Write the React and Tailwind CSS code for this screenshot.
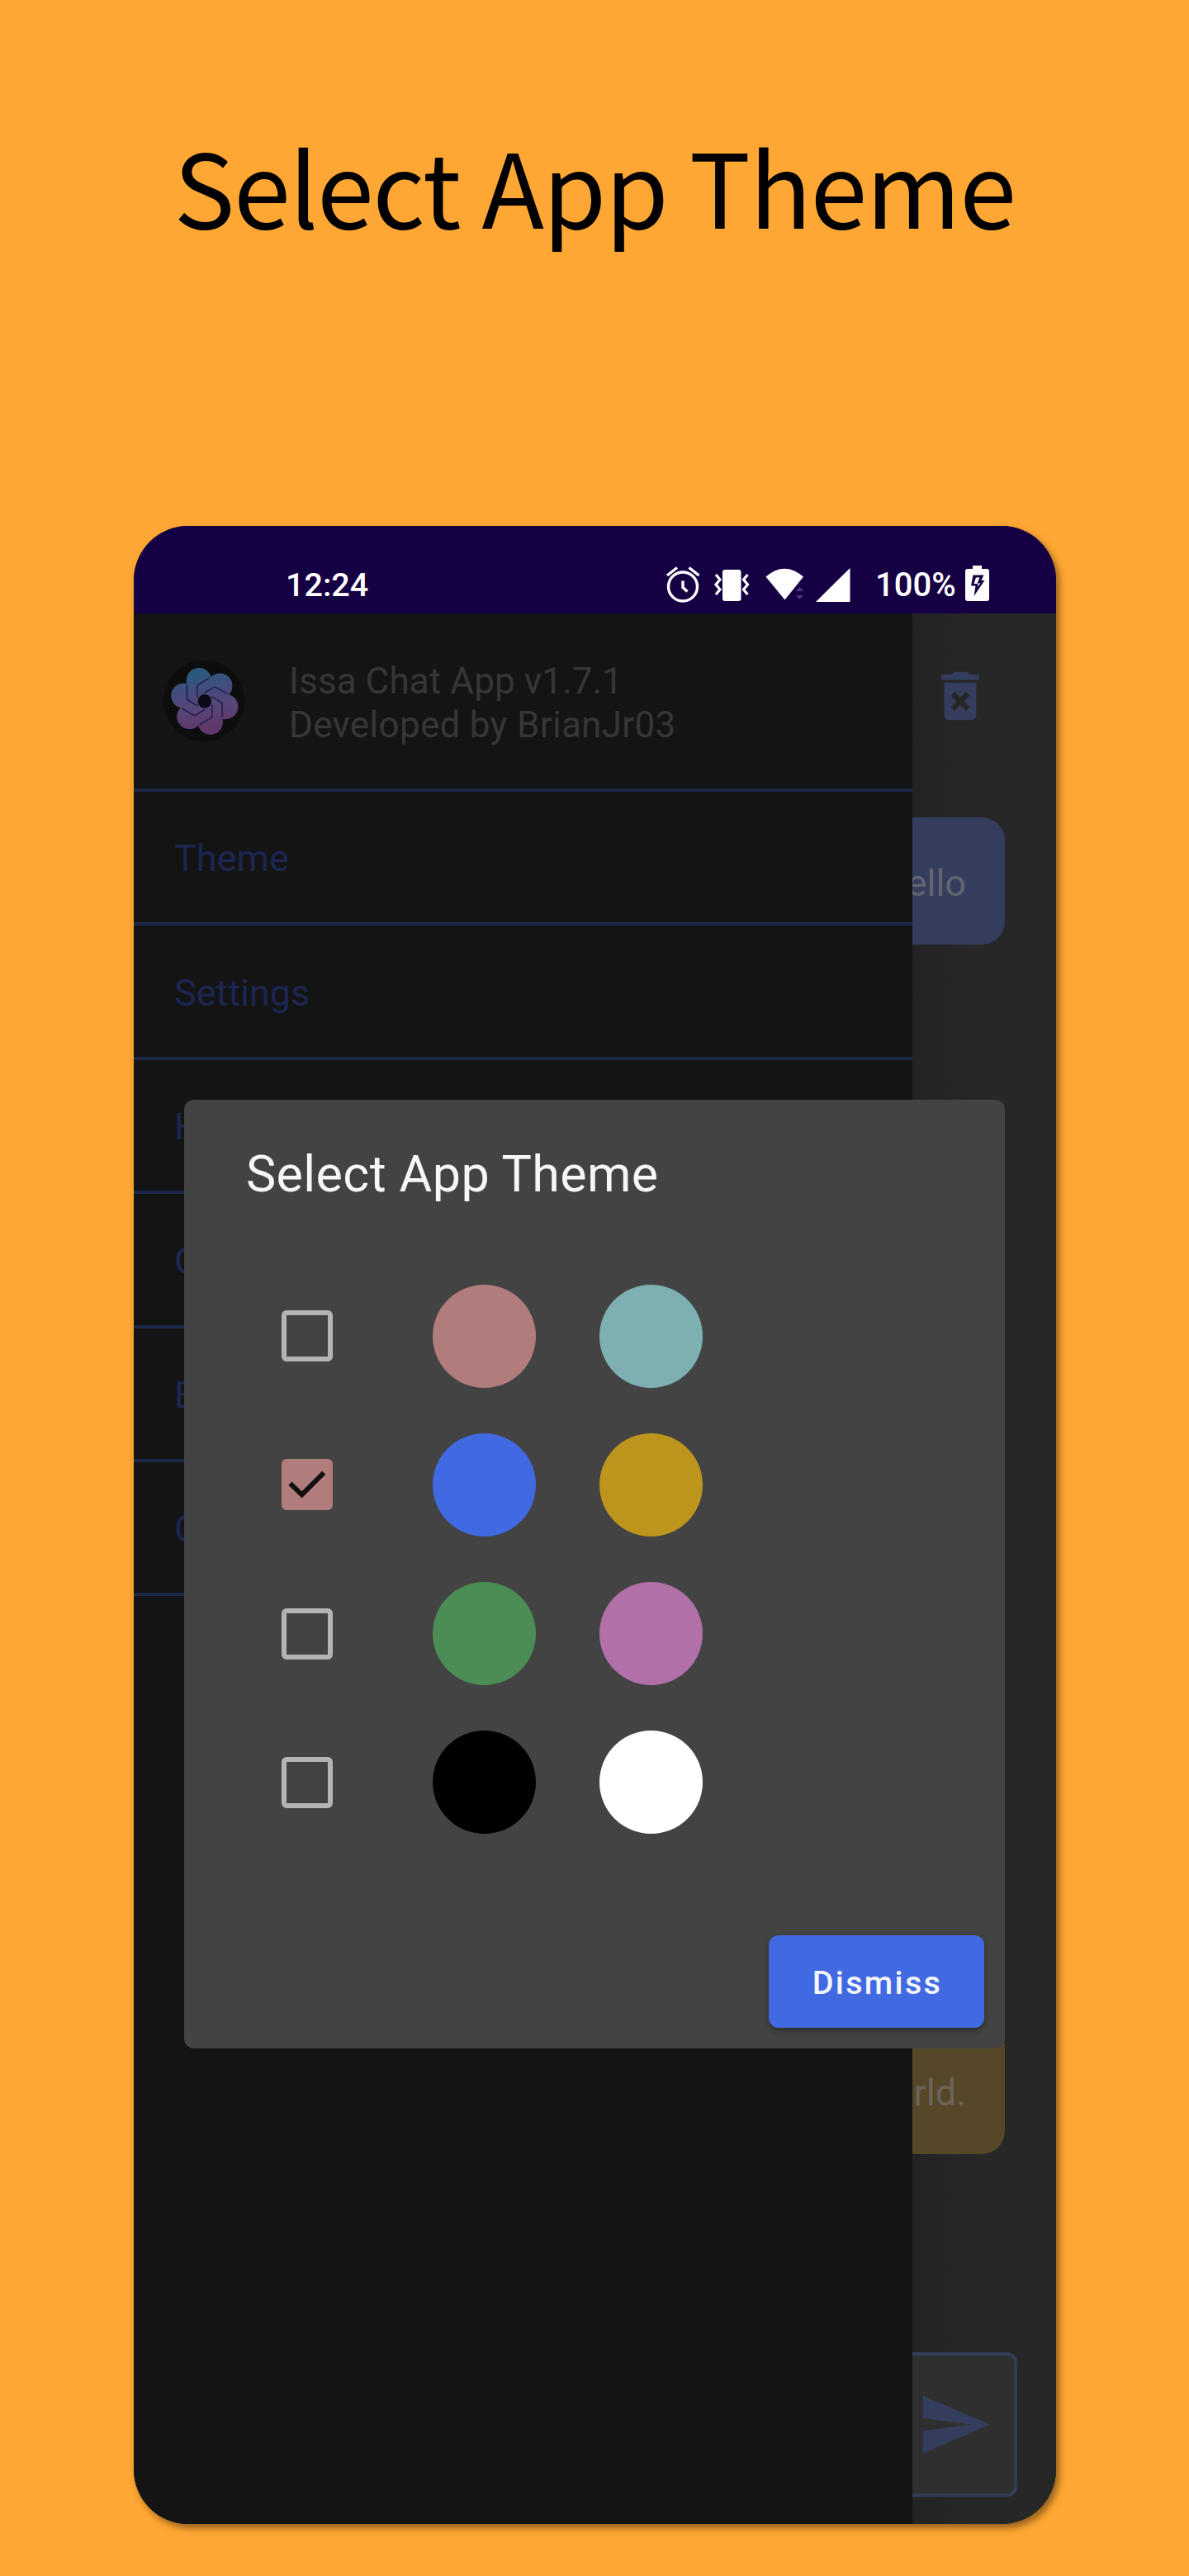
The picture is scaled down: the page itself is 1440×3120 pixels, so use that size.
const roboto = "font-['Roboto',sans-serif]";

const menuItems = ["Theme", "Settings", "Help", "Get API Key", "Edit Key", "Credits"];

const themes = [
  { checked: false, a: "bg-[#b07c7c]", b: "bg-[#7eafb1]" },
  { checked: true, a: "bg-[#4169e1]", b: "bg-[#bd951d]" },
  { checked: false, a: "bg-[#4c8d55]", b: "bg-[#b270a9]" },
  { checked: false, a: "bg-black", b: "bg-white" },
];

const petalAngles = [0, 60, 120, 180, 240, 300];

function StatusIcons() {
  return (
    <svg className="h-[64px] w-[250px] shrink-0" viewBox="0 0 250 64" fill="none">
      <g stroke="#fff" strokeWidth="3.4">
        <circle cx="31" cy="34.5" r="17.5" />
        <path d="M31 27.500V35.500l5.500 5" />
        <path d="M12 21l12-9.500M50.500 21l-12-9.500" />
      </g>
      <rect x="79" y="14" width="22.500" height="38" rx="3" fill="#fff" />
      <g stroke="#fff" strokeWidth="3.2">
        <path d="M71 20l5 6-5 6 5 6-5 6" />
        <path d="M109.500 20l-5 6 5 6-5 6 5 6" />
      </g>
      <path d="M131.500 22.500Q154 3 177 22.500L154.500 50.500Z" fill="#fff" />
      <path d="M168 40l4.500-5 4.500 5zM168 45l4.500 5 4.500-5z" fill="#4b3a86" />
      <path d="M233.500 12V53H192Z" fill="#fff" />
    </svg>
  );
}

function BatteryIcon() {
  return (
    <svg className="h-[43px] w-[29px] shrink-0" viewBox="0 0 29 43">
      <path
        d="M9 0h11v4h6q3 0 3 3v33q0 3-3 3H3q-3 0-3-3V7q0-3 3-3h6z"
        fill="#fff"
      />
      <path d="M9.500 11.500h13l-3 6.500h4L10.500 37l2-12.500H7z" fill="#160044" />
      <path d="M13 14.500h4.500l-3 7h4l-3.500 4 .500-3.500h-5z" fill="#fff" />
    </svg>
  );
}

function AppLogo() {
  return (
    <svg className="size-[98px] shrink-0" viewBox="0 0 294 294" fill="none">
      <defs>
        <linearGradient id="logo" x1="-20" y1="-100" x2="15" y2="100" gradientUnits="userSpaceOnUse">
          <stop offset="0" stopColor="#2c587d" />
          <stop offset="0.35" stopColor="#484b7c" />
          <stop offset="0.65" stopColor="#584576" />
          <stop offset="1" stopColor="#60366b" />
        </linearGradient>
      </defs>
      <circle cx="147" cy="147" r="147" fill="#0d0d0e" />
      <g transform="translate(149.500 148)">
        <path
          fill="url(#logo)"
          d="M-64.700 -63.900A42.500 42.500 0 0 1 23 -88A42.500 42.500 0 0 1 87.700 -24.100A42.500 42.500 0 0 1 64.700 63.900A42.500 42.500 0 0 1 -23 88A42.500 42.500 0 0 1 -87.700 24.100A42.500 42.500 0 0 1 -64.700 -63.900Z"
        />
        <g stroke="#272050" strokeWidth="5" strokeLinejoin="round">
          {petalAngles.map((angle) => (
            <path key={angle} d="M-27 -13V-58L18 -85" transform={`rotate(${angle})`} />
          ))}
        </g>
        <circle r="25" fill="#0b0a16" />
      </g>
    </svg>
  );
}

function Checkbox({ checked }) {
  if (!checked) {
    return <span className="size-[62px] rounded-[6px] border-[6px] border-[#b4b4b4]" />;
  }
  return (
    <span className="size-[62px] rounded-[6px] bg-[#b07c7c]">
      <svg viewBox="0 0 63 63" fill="none" className="size-full">
        <path d="M10.500 30L25 44 52 17" stroke="#141010" strokeWidth="6" />
      </svg>
    </span>
  );
}

export default function App() {
  return (
    <div className="flex h-[3120px] w-[1440px] flex-col overflow-hidden bg-[#ffa734]">
      <h1 className="h-[637px] pt-[133px] text-center font-['Noto_Sans_CJK_SC',sans-serif] text-[124px] leading-[180px] tracking-[-1.4px] whitespace-nowrap text-black">
        Select App Theme
      </h1>
      <div
        className={`relative ml-[162px] flex h-[2420px] w-[1117px] flex-col overflow-hidden rounded-[66px] bg-[#262626] shadow-[4px_5px_8px_rgba(60,40,10,0.55)] ${roboto}`}
      >
        <header className="flex h-[106px] shrink-0 items-start bg-[#160044] pt-[39px] text-[40px] leading-[66px] font-medium text-white">
          <span className="w-[450px] pl-[184px] text-[39.500px]">12:24</span>
          <span className="ml-[184px]">
            <StatusIcons />
          </span>
          <span className="ml-[14px] w-[96px] whitespace-nowrap">100%</span>
          <span className="ml-[13px] pt-[9px]">
            <BatteryIcon />
          </span>
        </header>

        <div className="flex min-h-0 flex-1">
          <aside className="w-[943px] shrink-0 bg-[#141414]">
            <div className="flex h-[216px] items-center gap-[54px] border-b-4 border-[#1d2747] pl-[36px]">
              <AppLogo />
              <p className="pt-[6px] text-[44px] leading-[53px] tracking-[0.3px] text-[#363636]">
                <span className="tracking-[0.1px]">Issa Chat App v1.7.1</span>
                <br />
                Developed by BrianJr03
              </p>
            </div>
            <nav>
              {menuItems.map((item) => (
                <div
                  key={item}
                  className="flex h-[162.400px] items-center border-b-4 border-[#1d2747] pt-[4px] pl-[49px] text-[45px] text-[#1c2653]"
                >
                  {item}
                </div>
              ))}
            </nav>
          </aside>

          <main className="flex flex-1 flex-col overflow-hidden bg-linear-to-r from-[#232323] to-[#272727] to-40%">
            <svg className="mt-[61px] ml-[19px] size-[78px] shrink-0" viewBox="0 0 24 24" fill="#343d5e">
              <path d="M6 19c0 1.100.9 2 2 2h8c1.100 0 2-.9 2-2V7H6v12zm2.460-7.120l1.410-1.410L12 12.590l2.120-2.120 1.410 1.410L13.410 14l2.120 2.120-1.410 1.410L12 15.410l-2.120 2.120-1.410-1.410L10.590 14l-2.130-2.120zM15.500 4l-1-1h-5l-1 1H5v2h14V4z" />
            </svg>
            <div className="mt-[108px] flex h-[154px] w-[112px] shrink-0 items-center justify-end rounded-r-[28px] bg-[#343d5e] pt-[5px] pr-[47px] text-[45px] text-[#62656f]">
              Hello
            </div>
            <div className="mt-[1309px] flex h-[156px] w-[112px] shrink-0 items-center justify-end rounded-r-[28px] bg-[#554728] pt-[7px] pr-[47px] text-[45px] whitespace-nowrap text-[#6b6359]">
              world.
            </div>
            <div className="mt-[240px] flex h-[175px] w-[127px] shrink-0 items-center rounded-r-[12px] border-4 border-l-0 border-[#333d57] bg-[#2f2f2f] pl-[5px]">
              <svg className="size-[93px] shrink-0" viewBox="0 0 24 24" fill="#343d5e">
                <path d="M2.010 21L23 12 2.010 3 2 10l15 2-15 2z" />
              </svg>
            </div>
          </main>
        </div>

        <section className="absolute top-[695px] left-[61px] flex h-[1149px] w-[994px] flex-col rounded-[12px] bg-[#434343]">
          <h2 className="pt-[54px] pl-[75px] text-[61px] leading-[72px] tracking-[0.4px] text-[#f6f6f6]">
            Select App Theme
          </h2>
          <div className="mt-[97.500px] flex flex-col gap-[55.300px] pl-[118px]">
            {themes.map((theme, i) => (
              <div key={i} className="flex h-[125px] items-center">
                <Checkbox checked={theme.checked} />
                <span className={`ml-[121px] size-[125px] rounded-full ${theme.a}`} />
                <span className={`ml-[77px] size-[125px] rounded-full ${theme.b}`} />
              </div>
            ))}
          </div>
          <button className="mt-auto mr-[25px] mb-[25px] flex h-[112px] w-[261px] items-center justify-center self-end rounded-[12px] bg-[#4169e1] pt-[4px] pl-[2px] text-[39.500px] font-medium tracking-[2.300px] text-[#f3f6fd] shadow-[0_4px_6px_rgba(0,0,0,0.3)]">
            Dismiss
          </button>
        </section>
      </div>
    </div>
  );
}
